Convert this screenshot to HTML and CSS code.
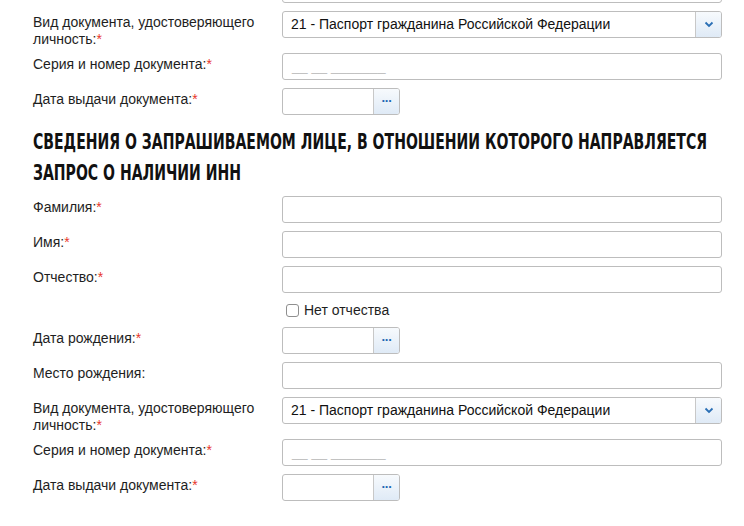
FILE: index.html
```html
<!DOCTYPE html>
<html lang="ru">
<head>
<meta charset="utf-8">
<link rel="stylesheet" href="styles.css">
</head>
<body>
<div class="form">
  <div class="row row-cut">
    <div class="label"></div>
    <div class="field"><div class="input"></div></div>
  </div>
  <div class="row">
    <div class="label">Вид документа, удостоверяющего личность:<span class="req">*</span></div>
    <div class="field">
      <div class="select"><span class="select-text">21 - Паспорт гражданина Российской Федерации</span><span class="select-btn"><svg width="10" height="7" viewBox="0 0 10 7"><path d="M1.5 1.5 L5 5 L8.5 1.5" fill="none" stroke="#2a6fb5" stroke-width="1.8"/></svg></span></div>
    </div>
  </div>
  <div class="row">
    <div class="label">Серия и номер документа:<span class="req">*</span></div>
    <div class="field"><div class="input"><span class="ph">__ __ _______</span></div></div>
  </div>
  <div class="row">
    <div class="label">Дата выдачи документа:<span class="req">*</span></div>
    <div class="field"><div class="date"><span class="date-in"></span><span class="date-btn">&middot;&middot;&middot;</span></div></div>
  </div>

  <h2 class="section-title"><span>Сведения о запрашиваемом лице, в отношении которого направляется запрос о наличии ИНН</span></h2>

  <div class="row">
    <div class="label">Фамилия:<span class="req">*</span></div>
    <div class="field"><div class="input"></div></div>
  </div>
  <div class="row">
    <div class="label">Имя:<span class="req">*</span></div>
    <div class="field"><div class="input"></div></div>
  </div>
  <div class="row">
    <div class="label">Отчество:<span class="req">*</span></div>
    <div class="field"><div class="input"></div></div>
  </div>
  <div class="row row-check">
    <div class="label"></div>
    <div class="field"><label class="check"><span class="box"></span>Нет отчества</label></div>
  </div>
  <div class="row">
    <div class="label">Дата рождения:<span class="req">*</span></div>
    <div class="field"><div class="date"><span class="date-in"></span><span class="date-btn">&middot;&middot;&middot;</span></div></div>
  </div>
  <div class="row">
    <div class="label">Место рождения:</div>
    <div class="field"><div class="input"></div></div>
  </div>
  <div class="row">
    <div class="label">Вид документа, удостоверяющего личность:<span class="req">*</span></div>
    <div class="field">
      <div class="select"><span class="select-text">21 - Паспорт гражданина Российской Федерации</span><span class="select-btn"><svg width="10" height="7" viewBox="0 0 10 7"><path d="M1.5 1.5 L5 5 L8.5 1.5" fill="none" stroke="#2a6fb5" stroke-width="1.8"/></svg></span></div>
    </div>
  </div>
  <div class="row">
    <div class="label">Серия и номер документа:<span class="req">*</span></div>
    <div class="field"><div class="input"><span class="ph">__ __ _______</span></div></div>
  </div>
  <div class="row">
    <div class="label">Дата выдачи документа:<span class="req">*</span></div>
    <div class="field"><div class="date"><span class="date-in"></span><span class="date-btn">&middot;&middot;&middot;</span></div></div>
  </div>
</div>
</body>
</html>
```

FILE: styles.css
```css
html, body {
  margin: 0;
  padding: 0;
  background: #fff;
  overflow: hidden;
}
body {
  font-family: "Liberation Sans", Arial, sans-serif;
  font-size: 14px;
  color: #222;
}
.form {
  padding-left: 33px;
  margin-top: -24px;
  width: 689px;
}
.row {
  display: grid;
  grid-template-columns: 249px 440px;
  margin-bottom: 8px;
  align-items: start;
}
.label {
  padding-top: 3px;
  line-height: 17px;
  margin-bottom: -3px;
  padding-right: 16px;
  color: #1e1e1e;
}
.req {
  color: #e8352b;
}
.input {
  box-sizing: border-box;
  height: 27px;
  border: 1px solid #bdbdbd;
  border-radius: 3px;
  background: #fff;
  padding: 0 9px;
  line-height: 25px;
}
.ph {
  color: #c2c2c2;
}
.select {
  box-sizing: border-box;
  height: 27px;
  border: 1px solid #bdbdbd;
  border-radius: 3px;
  display: flex;
  overflow: hidden;
}
.select-text {
  flex: 1;
  padding-left: 8px;
  line-height: 25px;
  color: #111;
}
.select-btn {
  width: 25px;
  border-left: 1px solid #c8c8c8;
  background: linear-gradient(#f7fafd, #dfeaf6);
  display: flex;
  align-items: center;
  justify-content: center;
}
.date {
  box-sizing: border-box;
  width: 118px;
  height: 27px;
  border: 1px solid #bdbdbd;
  border-radius: 3px;
  display: flex;
  overflow: hidden;
}
.date-in {
  flex: 1;
}
.date-btn {
  width: 25px;
  border-left: 1px solid #c8c8c8;
  background: linear-gradient(#f7fafd, #dfeaf6);
  color: #1f66b3;
  font-weight: bold;
  font-size: 13px;
  line-height: 23px;
  text-align: center;
  letter-spacing: -1px;
}
.section-title {
  margin: 11px 0 8px;
  font-family: "DejaVu Sans Condensed", "DejaVu Sans", sans-serif;
  font-weight: bold;
  font-size: 22px;
  line-height: 31px;
  text-transform: uppercase;
  color: #111;
  width: 975px;
  transform: scaleX(0.71);
  transform-origin: left top;
  letter-spacing: 0;
}
.row-check .label {
  padding-top: 0;
  margin-bottom: 0;
}
.check {
  display: flex;
  align-items: center;
  height: 18px;
  padding-left: 4px;
  color: #1e1e1e;
}
.box {
  box-sizing: border-box;
  width: 13px;
  height: 13px;
  border: 1px solid #8f8f8f;
  border-radius: 3px;
  background: #fff;
  margin-right: 5px;
}
```
